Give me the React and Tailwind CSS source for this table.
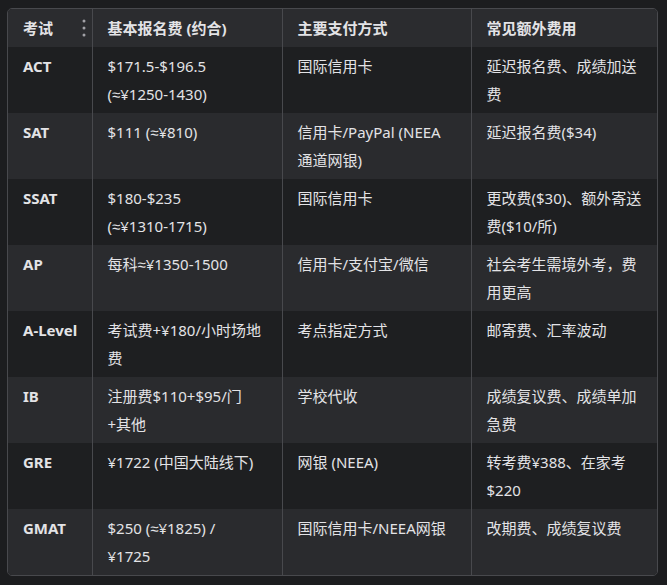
const headers = ["考试", "基本报名费 (约合)", "主要支付方式", "常见额外费用"];

// line breaks follow the reference wrap points
const rows = [
  ["ACT", "$171.5-$196.5\n(≈¥1250-1430)", "国际信用卡", "延迟报名费、成绩加送\n费"],
  ["SAT", "$111 (≈¥810)", "信用卡/PayPal (NEEA\n通道网银)", "延迟报名费($34)"],
  ["SSAT", "$180-$235\n(≈¥1310-1715)", "国际信用卡", "更改费($30)、额外寄送\n费($10/所)"],
  ["AP", "每科≈¥1350-1500", "信用卡/支付宝/微信", "社会考生需境外考，费\n用更高"],
  ["A-Level", "考试费+¥180/小时场地\n费", "考点指定方式", "邮寄费、汇率波动"],
  ["IB", "注册费$110+$95/门\n+其他", "学校代收", "成绩复议费、成绩单加\n急费"],
  ["GRE", "¥1722 (中国大陆线下)", "网银 (NEEA)", "转考费¥388、在家考\n$220"],
  ["GMAT", "$250 (≈¥1825) /\n¥1725", "国际信用卡/NEEA网银", "改期费、成绩复议费"],
];

function MoreDots() {
  return (
    <svg className="h-[20px] w-[4px]" viewBox="0 0 4 20" fill="#a1a1a6">
      <circle cx="2" cy="3" r="1.5" />
      <circle cx="2" cy="10" r="1.5" />
      <circle cx="2" cy="17" r="1.5" />
    </svg>
  );
}

export default function App() {
  return (
    <div
      className="min-h-[585px] w-[667px] bg-[#1c1d1f] pl-[7px] pt-[8px] text-[15px] leading-[28px] text-[#e3e3e6]"
      style={{ fontFamily: '"Noto Sans", "Liberation Sans", "Noto Sans CJK SC", sans-serif' }}
    >
      <div className="w-[651px] overflow-hidden rounded-[5px] border border-[#48494d]">
        <table className="w-full table-fixed border-collapse">
          <colgroup>
            <col className="w-[84px]" />
            <col className="w-[190px]" />
            <col className="w-[189px]" />
            <col />
          </colgroup>
          <thead>
            <tr className="bg-[#2b2c2f]">
              {headers.map((h, i) => (
                <th
                  key={h}
                  className={`h-[38px] px-[15px] py-[5px] text-left align-top font-bold ${i > 0 ? "border-l border-[#48494d]" : ""}`}
                >
                  {i === 0 ? (
                    <div className="flex items-center justify-between">
                      <span>{h}</span>
                      <span className="-mr-[9px] flex items-center">
                        <MoreDots />
                      </span>
                    </div>
                  ) : (
                    h
                  )}
                </th>
              ))}
            </tr>
          </thead>
          <tbody>
            {rows.map((r, ri) => (
              <tr key={r[0]} className={ri % 2 === 0 ? "bg-[#1e1f21]" : "bg-[#2a2b2e]"}>
                {r.map((c, ci) => (
                  <td
                    key={ci}
                    className={`h-[66px] whitespace-pre py-[5px] align-top ${ci === 0 ? "pl-[15px] pr-0 font-bold" : "border-l border-[#48494d] px-[15px]"}`}
                  >
                    {c}
                  </td>
                ))}
              </tr>
            ))}
          </tbody>
        </table>
      </div>
    </div>
  );
}
